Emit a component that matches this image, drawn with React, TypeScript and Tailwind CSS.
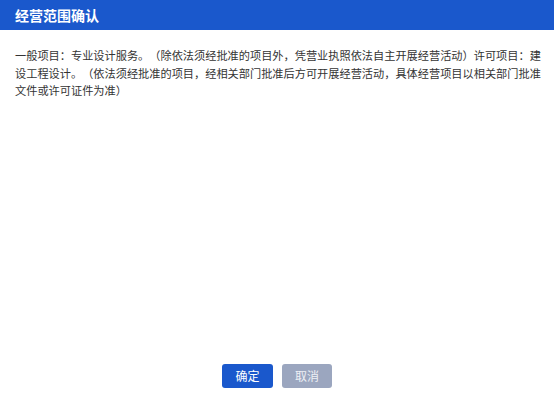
import React from "react";

export default function App() {
  return (
    <div
      className="flex h-[397px] w-[554px] flex-col bg-white"
      style={{ fontFamily: '"Microsoft YaHei", "Noto Sans CJK SC", "Noto Sans", sans-serif' }}
    >
      <div className="flex h-[30px] items-center bg-[#1a58cc] pl-[15px]">
        <span className="text-[14px] font-bold leading-none text-white">经营范围确认</span>
      </div>
      <div className="flex-1 pl-[15px] pr-[10px] pt-[17px]">
        <p className="text-[11.2px] leading-[17.5px] text-[#333333] [text-spacing-trim:space-all]">
          一般项目：专业设计服务。（除依法须经批准的项目外，凭营业执照依法自主开展经营活动）许可项目：建设工程设计。（依法须经批准的项目，经相关部门批准后方可开展经营活动，具体经营项目以相关部门批准文件或许可证件为准）
        </p>
      </div>
      <div className="flex justify-center gap-[9px] pb-[9px]">
        <button className="flex h-[24px] w-[51px] items-center justify-center rounded-[3px] bg-[#1a58cc] text-[12px] text-white">
          确定
        </button>
        <button className="flex h-[24px] w-[50px] items-center justify-center rounded-[3px] bg-[#9ba6bf] text-[12px] text-[#eef0f5]">
          取消
        </button>
      </div>
    </div>
  );
}
